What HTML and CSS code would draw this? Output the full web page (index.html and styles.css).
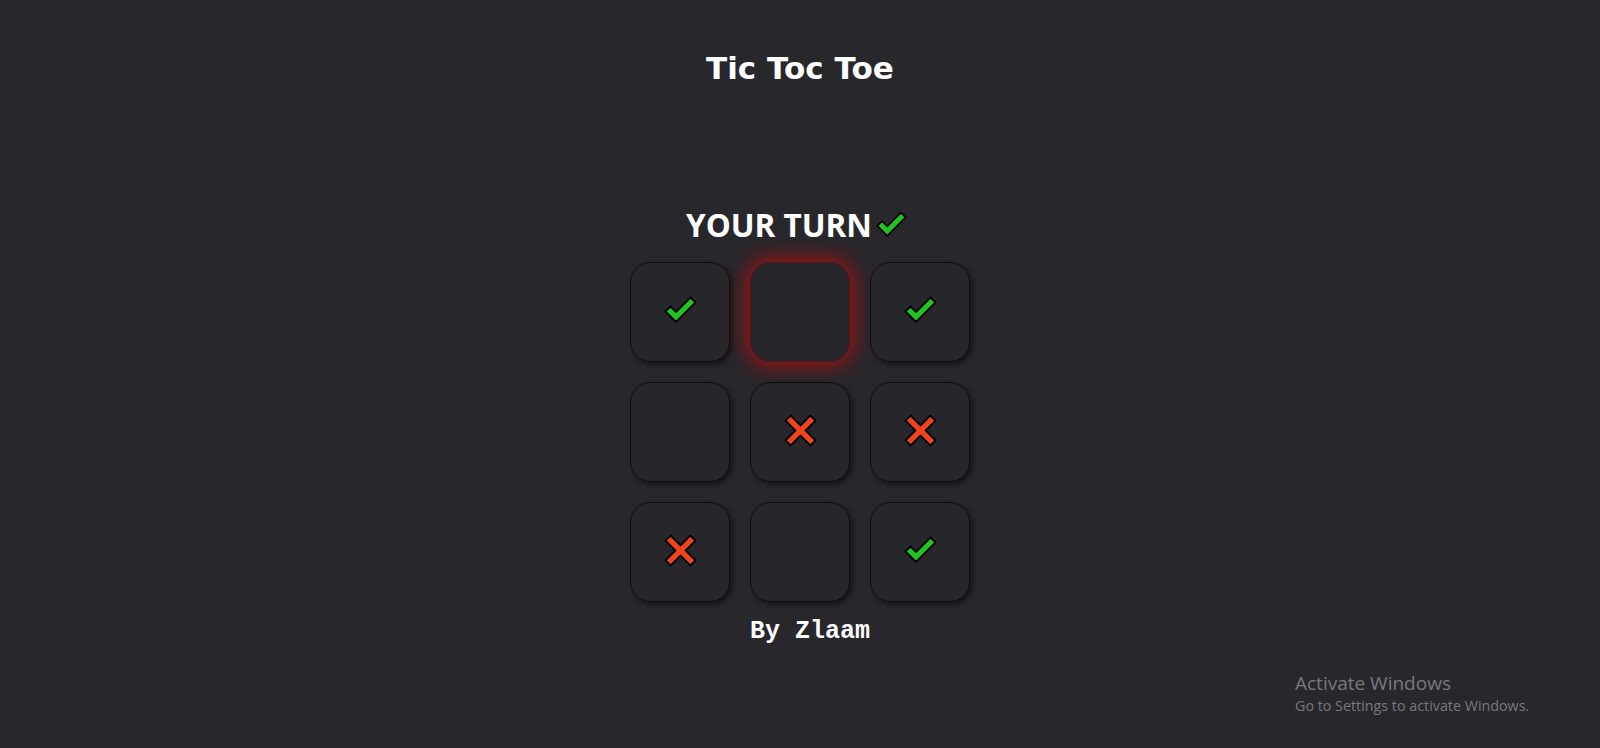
FILE: index.html
```html
<!DOCTYPE html>
<html lang="en">
<head>
<meta charset="utf-8">
<title>Tic Toc Toe</title>
<link rel="stylesheet" href="styles.css">
</head>
<body>
<main class="app">
  <h1 class="title">Tic Toc Toe</h1>
  <div class="status">
    <span>YOUR TURN</span>
    <svg class="status-icon" viewBox="0 0 35 29"><polygon class="check" points="2.53,16.47 7.47,11.53 13,17.05 27.53,2.53 32.47,7.47 13,26.95"/></svg>
  </div>
  <div class="board">
    <div class="cell"><svg class="mark-check" viewBox="0 0 35 29"><polygon class="check" points="2.53,16.47 7.47,11.53 13,17.05 27.53,2.53 32.47,7.47 13,26.95"/></svg></div>
    <div class="cell cell-active"></div>
    <div class="cell"><svg class="mark-check" viewBox="0 0 35 29"><polygon class="check" points="2.53,16.47 7.47,11.53 13,17.05 27.53,2.53 32.47,7.47 13,26.95"/></svg></div>
    <div class="cell"></div>
    <div class="cell"><svg class="mark-x" viewBox="0 0 32 32"><polygon class="cross" points="6.47,1.53 16,11.05 25.53,1.53 30.47,6.47 20.95,16 30.47,25.53 25.53,30.47 16,20.95 6.47,30.47 1.53,25.53 11.05,16 1.53,6.47"/></svg></div>
    <div class="cell"><svg class="mark-x" viewBox="0 0 32 32"><polygon class="cross" points="6.47,1.53 16,11.05 25.53,1.53 30.47,6.47 20.95,16 30.47,25.53 25.53,30.47 16,20.95 6.47,30.47 1.53,25.53 11.05,16 1.53,6.47"/></svg></div>
    <div class="cell"><svg class="mark-x" viewBox="0 0 32 32"><polygon class="cross" points="6.47,1.53 16,11.05 25.53,1.53 30.47,6.47 20.95,16 30.47,25.53 25.53,30.47 16,20.95 6.47,30.47 1.53,25.53 11.05,16 1.53,6.47"/></svg></div>
    <div class="cell"></div>
    <div class="cell"><svg class="mark-check" viewBox="0 0 35 29"><polygon class="check" points="2.53,16.47 7.47,11.53 13,17.05 27.53,2.53 32.47,7.47 13,26.95"/></svg></div>
  </div>
  <p class="credit">By Zlaam</p>
</main>
<div class="watermark">
  <div class="wm-title">Activate Windows</div>
  <div class="wm-sub">Go to Settings to activate Windows.</div>
</div>
</body>
</html>
```
FILE: styles.css
```css
html, body {
  margin: 0;
  padding: 0;
}
body {
  background: #28272c;
  height: 100vh;
  overflow: hidden;
  color: #fff;
}
.app {
  display: flex;
  flex-direction: column;
  align-items: center;
}
.title {
  margin: 48px 0 0;
  font-family: "DejaVu Sans", sans-serif;
  font-weight: bold;
  font-size: 31px;
  line-height: 40px;
  color: #fff;
}
.status {
  margin-top: 117px;
  height: 40px;
  display: flex;
  align-items: center;
  gap: 3px;
  padding-right: 6px;
  font-family: "Open Sans", sans-serif;
  font-weight: 700;
  font-size: 31.5px;
  line-height: 40px;
}
.status-icon {
  width: 33px;
  height: 28px;
  margin-top: -2px;
}
.check {
  fill: #22c222;
  stroke: #000;
  stroke-width: 1.8;
  stroke-linejoin: miter;
}
.cross {
  fill: #f0441e;
  stroke: #000;
  stroke-width: 1.8;
  stroke-linejoin: miter;
}
.board {
  margin-top: 17px;
  display: grid;
  grid-template-columns: repeat(3, 100px);
  grid-auto-rows: 100px;
  gap: 20px;
}
.cell {
  box-sizing: border-box;
  border: 1px solid #0e0e10;
  border-radius: 20px;
  background: #27262b;
  box-shadow: 3px 3px 5px rgba(0, 0, 0, 0.45);
  display: flex;
  align-items: center;
  justify-content: center;
}
.cell-active {
  border-color: #5a1215;
  box-shadow: 0 0 20px 4px rgba(185, 12, 12, 0.8);
}
.mark-check {
  width: 35px;
  height: 29px;
  margin-top: -6px;
}
.mark-x {
  width: 33px;
  height: 33px;
  margin-top: -4px;
}
.credit {
  margin: 15px 0 0;
  padding-left: 20px;
  font-family: "Liberation Mono", monospace;
  font-weight: bold;
  font-size: 25px;
  line-height: 30px;
}
.watermark {
  position: absolute;
  left: 1295px;
  top: 670px;
  font-family: "Open Sans", sans-serif;
  color: #78787c;
}
.wm-title {
  font-size: 19px;
  line-height: 26px;
}
.wm-sub {
  font-size: 14.3px;
  line-height: 20px;
}
```
